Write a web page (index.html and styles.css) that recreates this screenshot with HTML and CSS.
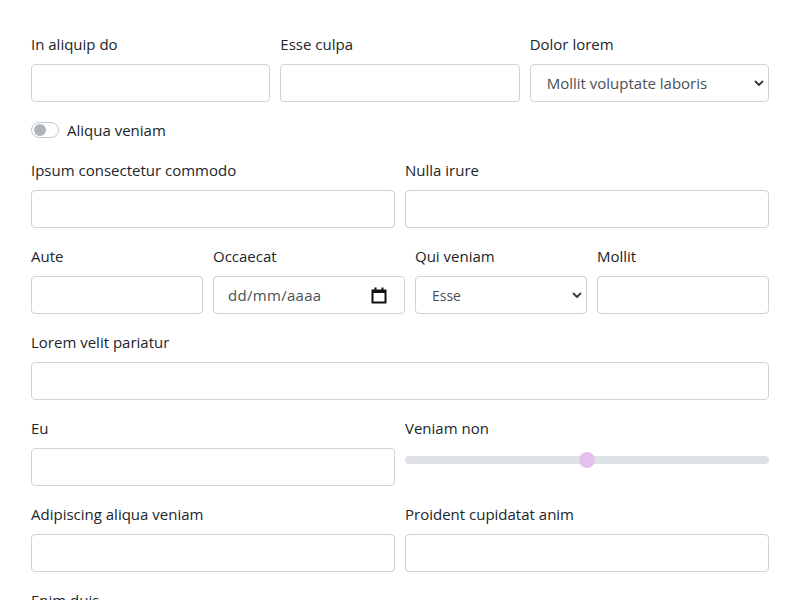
FILE: index.html
```html
<!DOCTYPE html>
<html lang="es">
<head>
<meta charset="utf-8">
<link rel="stylesheet" href="styles.css">
</head>
<body>
<form class="form">
  <div class="row cols-3">
    <div class="field"><label class="label">In aliquip do</label><input class="input" type="text"></div>
    <div class="field"><label class="label">Esse culpa</label><input class="input" type="text"></div>
    <div class="field"><label class="label">Dolor lorem</label>
      <div class="select-wrap">
        <select class="input select"><option>Mollit voluptate laboris</option></select>
        <svg class="chev" width="10" height="10" viewBox="0 0 10 10"><path d="M1.5 3.5l3.5 3.5 3.5-3.5" fill="none" stroke="#343a40" stroke-width="1.8" stroke-linecap="round" stroke-linejoin="round"/></svg>
      </div>
    </div>
  </div>
  <div class="switch-row">
    <span class="switch"><span class="knob"></span></span>
    <span class="switch-label">Aliqua veniam</span>
  </div>
  <div class="row cols-2">
    <div class="field"><label class="label">Ipsum consectetur commodo</label><input class="input" type="text"></div>
    <div class="field"><label class="label">Nulla irure</label><input class="input" type="text"></div>
  </div>
  <div class="row cols-4">
    <div class="field"><label class="label">Aute</label><input class="input" type="text"></div>
    <div class="field"><label class="label">Occaecat</label>
      <div class="date">
        <span class="date-text">dd/mm/aaaa</span>
        <svg class="cal" width="16" height="17" viewBox="0 0 16 17"><rect x="1.5" y="3.5" width="13" height="12" fill="none" stroke="#111" stroke-width="2"/><rect x="1.5" y="3" width="13" height="3" fill="#111"/><rect x="3.5" y="0.5" width="2" height="3" fill="#111"/><rect x="10.5" y="0.5" width="2" height="3" fill="#111"/></svg>
      </div>
    </div>
    <div class="field"><label class="label">Qui veniam</label>
      <div class="select-wrap">
        <select class="input select small"><option>Esse</option></select>
        <svg class="chev" width="10" height="10" viewBox="0 0 10 10"><path d="M1.5 3.5l3.5 3.5 3.5-3.5" fill="none" stroke="#343a40" stroke-width="1.8" stroke-linecap="round" stroke-linejoin="round"/></svg>
      </div>
    </div>
    <div class="field"><label class="label">Mollit</label><input class="input" type="text"></div>
  </div>
  <div class="row">
    <div class="field"><label class="label">Lorem velit pariatur</label><input class="input" type="text"></div>
  </div>
  <div class="row cols-2">
    <div class="field"><label class="label">Eu</label><input class="input" type="text"></div>
    <div class="field"><label class="label">Veniam non</label>
      <div class="range"><span class="track"></span><span class="thumb"></span></div>
    </div>
  </div>
  <div class="row cols-2">
    <div class="field"><label class="label">Adipiscing aliqua veniam</label><input class="input" type="text"></div>
    <div class="field"><label class="label">Proident cupidatat anim</label><input class="input" type="text"></div>
  </div>
  <div class="row">
    <div class="field"><label class="label">Enim duis</label><input class="input" type="text"></div>
  </div>
</form>
</body>
</html>
```
FILE: styles.css
```css
* { box-sizing: border-box; }
html, body { margin: 0; background: #fff; }
body {
  font-family: "Open Sans", "Noto Sans", sans-serif;
  font-size: 15px;
  color: #212529;
  padding: 32px 31px 0 31px;
  overflow: hidden;
  height: 600px;
}
.form { display: flex; flex-direction: column; gap: 16px; }
.row { display: grid; gap: 10px; grid-template-columns: 1fr; }
.cols-2 { grid-template-columns: 1fr 1fr; }
.cols-3 { grid-template-columns: 1fr 1fr 1fr; }
.cols-4 { grid-template-columns: 172fr 192fr 172fr 172fr; }
.field { display: flex; flex-direction: column; min-width: 0; }
.label { line-height: 24px; height: 24px; margin-bottom: 8px; }
.input {
  display: block;
  width: 100%;
  height: 38px;
  border: 1px solid #ced4da;
  border-radius: 4px;
  background: #fff;
  font: inherit;
  padding: 0 12px;
  color: #495057;
}
.select-wrap { position: relative; }
.select {
  -webkit-appearance: none;
  appearance: none;
  padding-left: 16px;
  font-size: 15px;
}
.select.small { font-size: 14px; }
.chev { position: absolute; right: 5px; top: 14px; pointer-events: none; }
.switch-row { display: flex; align-items: center; gap: 8px; height: 24px; }
.switch {
  width: 28px; height: 16px;
  border: 1px solid #c3c8cd;
  border-radius: 8px;
  display: flex; align-items: center;
  padding-left: 2px;
}
.knob { width: 12px; height: 12px; border-radius: 50%; background: #adb5bd; }
.date {
  height: 38px;
  border: 1px solid #ced4da;
  border-radius: 4px;
  display: flex; align-items: center; justify-content: space-between;
  padding: 0 17px 0 14px;
}
.date-text { color: #495057; letter-spacing: 0.3px; }
.range { position: relative; height: 24px; display: flex; align-items: center; }
.track { display: block; width: 100%; height: 8px; border-radius: 4px; background: #dee2e6; }
.thumb {
  position: absolute;
  left: calc(50% - 8px);
  top: 4px;
  width: 16px; height: 16px; border-radius: 50%;
  background: #e4c0ef;
}
```
